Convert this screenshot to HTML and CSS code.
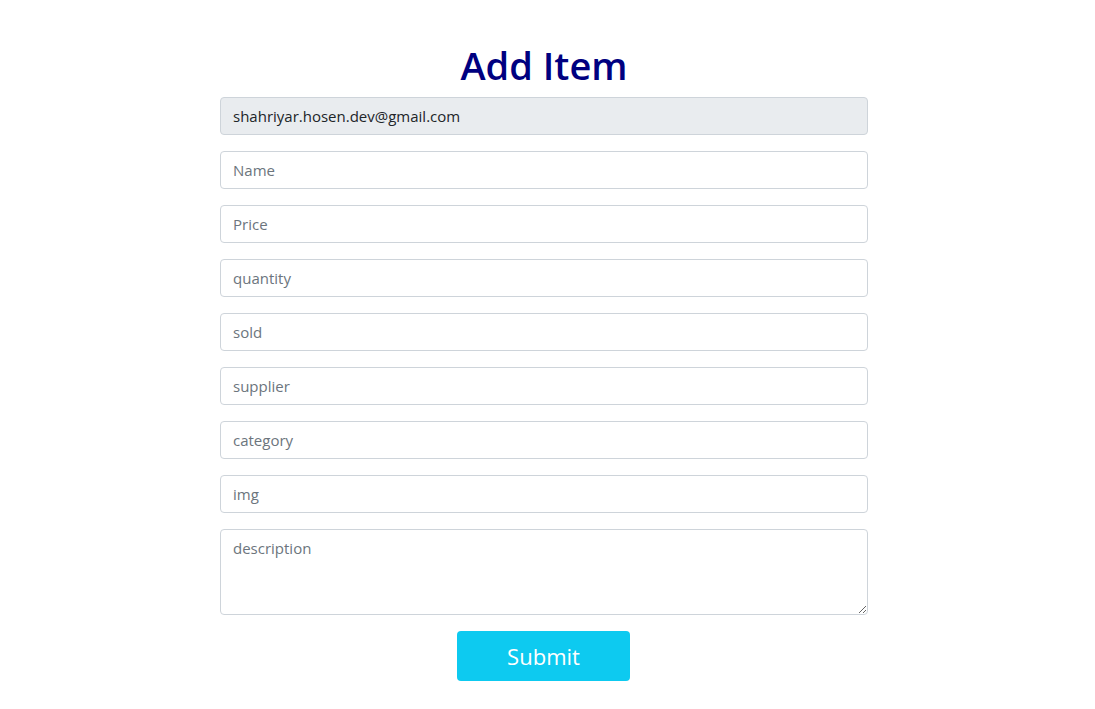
FILE: index.html
```html
<!DOCTYPE html>
<html lang="en">
<head>
<meta charset="utf-8">
<title>Add Item</title>
<link rel="stylesheet" href="styles.css">
</head>
<body>
<main class="page">
  <form class="item-form">
    <h1 class="title">Add Item</h1>
    <input class="field field-disabled" type="email" value="shahriyar.hosen.dev@gmail.com" disabled>
    <input class="field" type="text" placeholder="Name">
    <input class="field" type="text" placeholder="Price">
    <input class="field" type="text" placeholder="quantity">
    <input class="field" type="text" placeholder="sold">
    <input class="field" type="text" placeholder="supplier">
    <input class="field" type="text" placeholder="category">
    <input class="field" type="text" placeholder="img">
    <textarea class="field field-area" placeholder="description"></textarea>
    <button class="submit" type="button">Submit</button>
  </form>
</main>
</body>
</html>
```

FILE: styles.css
```css
* { box-sizing: border-box; }
html, body { margin: 0; padding: 0; background: #fff; }
body {
  font-family: "Open Sans", "Noto Sans", sans-serif;
  color: #212529;
}
.page {
  display: flex;
  justify-content: center;
  padding: 41px 7px 0 0;
}
.item-form {
  width: 648px;
  display: flex;
  flex-direction: column;
  align-items: stretch;
}
.title {
  margin: 0 0 8px;
  text-align: center;
  color: #000080;
  font-size: 38px;
  font-weight: 600;
  line-height: 48px;
}
.field {
  display: block;
  width: 100%;
  height: 38px;
  margin: 0 0 16px;
  padding: 6px 12px;
  font-family: inherit;
  font-size: 15px;
  line-height: 24px;
  color: #212529;
  background: #fff;
  border: 1px solid #ced4da;
  border-radius: 4px;
  outline: none;
}
.field::placeholder { color: #6c757d; opacity: 1; }
.field-disabled { background: #e9ecef; color: #212529; opacity: 1; -webkit-text-fill-color: #212529; }
.field-area { height: 86px; resize: vertical; }
.submit {
  align-self: center;
  width: 173px;
  height: 50px;
  margin-right: 1px;
  border: 0;
  border-radius: 4px;
  background: #0dcaf0;
  color: #fff;
  font-family: inherit;
  font-size: 22px;
  line-height: 30px;
  padding: 8px 16px;
}
```
